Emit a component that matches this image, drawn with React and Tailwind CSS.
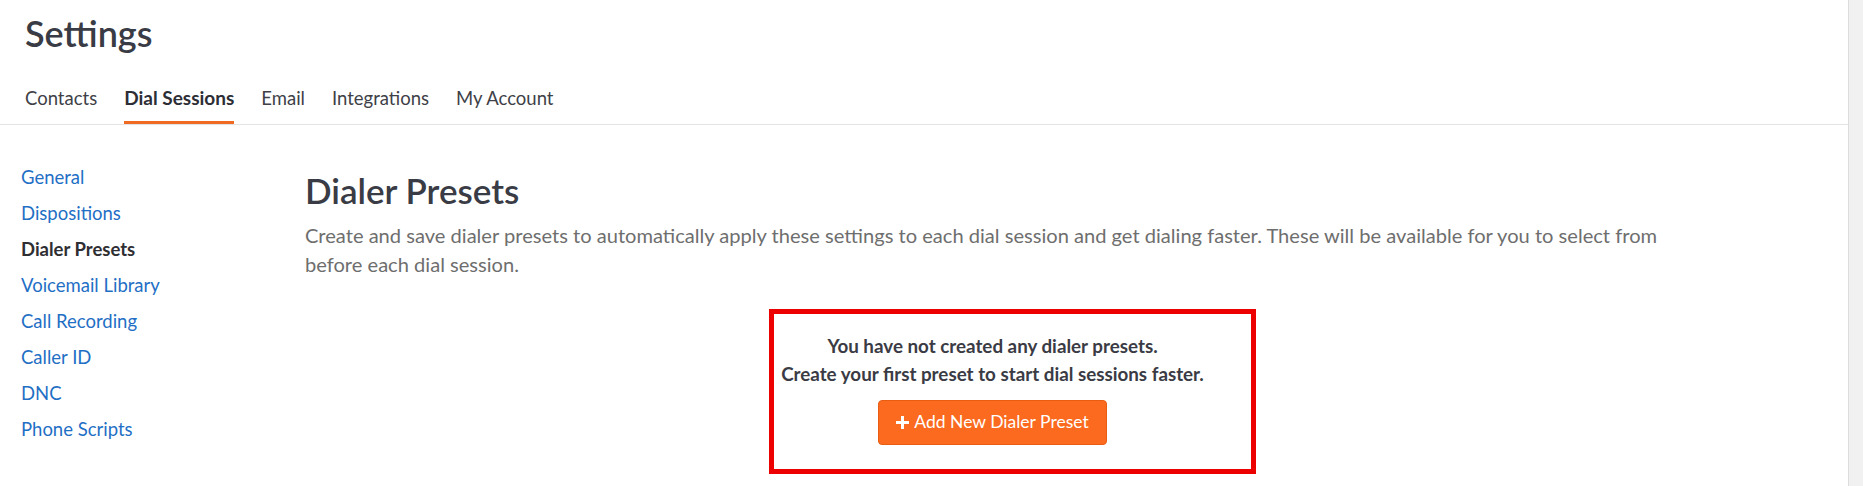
import React from "react";

const tabs = ["Contacts", "Dial Sessions", "Email", "Integrations", "My Account"];
const sideLinks = [
  "General",
  "Dispositions",
  "Dialer Presets",
  "Voicemail Library",
  "Call Recording",
  "Caller ID",
  "DNC",
  "Phone Scripts",
];

function PlusIcon() {
  return (
    <svg width="13" height="13" viewBox="0 0 13 13" className="mr-[5px]" aria-hidden="true">
      <rect x="5" y="0" width="3" height="13" fill="#fff" />
      <rect x="0" y="5" width="13" height="3" fill="#fff" />
    </svg>
  );
}

export default function App() {
  return (
    <div className="flex h-[486px] w-[1863px] bg-white font-['Lato',sans-serif]">
      <div className="flex flex-1 flex-col">
        <header className="border-b border-[#e3e3e3] px-[25px]">
          <h1 className="pt-[13px] text-[36px] leading-[40px] font-semibold text-[#393b45]">Settings</h1>
          <nav className="mt-[33px] flex gap-[27px]">
            {tabs.map((t) => (
              <a
                key={t}
                href="#"
                className={`border-b-[3px] pb-[11px] leading-[24px] ${
                  t === "Dial Sessions"
                    ? "border-[#f06a24] text-[19px] font-bold text-[#2c2d35]"
                    : "border-transparent text-[18.5px] text-[#3e3f47]"
                }`}
              >
                {t}
              </a>
            ))}
          </nav>
        </header>

        <div className="flex flex-1">
          <aside className="w-[305px] pt-[34px] pl-[21px]">
            <ul>
              {sideLinks.map((l) => (
                <li key={l} className="text-[18.5px] leading-[36px]">
                  <a
                    href="#"
                    className={l === "Dialer Presets" ? "font-bold text-[#2e2e33]" : "text-[#1f6fc5]"}
                  >
                    {l}
                  </a>
                </li>
              ))}
            </ul>
          </aside>

          <main className="w-[1374px] pt-[45px]">
            <h2 className="text-[35px] leading-[40px] font-semibold text-[#393b45]">Dialer Presets</h2>
            <p className="mt-[11px] text-[20.1px] leading-[29px] text-[#6e6e6e]">
              Create and save dialer presets to automatically apply these settings to each dial session and get
              dialing faster. These will be available for you to select from before each dial session.
            </p>

            <div className="mt-[30px] ml-[464px] h-[165px] w-[487px] border-[5px] border-[#ec0000]">
              <div className="flex flex-col items-center pt-[18px] pr-[40px]">
                <p className="text-[18.8px] leading-[28px] font-bold text-[#3a3b44]">
                  You have not created any dialer presets.
                </p>
                <p className="text-[18.8px] leading-[28px] font-bold text-[#3a3b44]">
                  Create your first preset to start dial sessions faster.
                </p>
                <button
                  type="button"
                  className="mt-[12px] flex h-[45px] w-[229px] items-center justify-center rounded-[4px] border border-[#e85d12] bg-[#fb6a1e] text-[17.5px] text-white"
                >
                  <PlusIcon />
                  Add New Dialer Preset
                </button>
              </div>
            </div>
          </main>
        </div>
      </div>
      <div className="h-[486px] w-[15px] border-l border-[#dcdcdc] bg-[#f1f1f2]" />
    </div>
  );
}
